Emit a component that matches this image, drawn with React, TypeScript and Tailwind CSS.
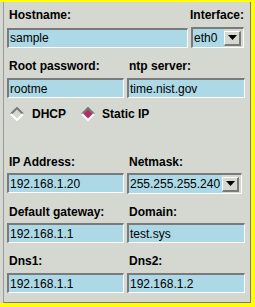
import React from 'react';

const font = { fontFamily: '"Liberation Sans", Arial, sans-serif' };

function Label({ children, right }: { children: React.ReactNode; right?: boolean }) {
  return (
    <div className={`h-[14px] leading-[14px] text-[12px] font-bold text-black px-[2px] ${right ? 'text-right' : ''}`}>
      {children}
    </div>
  );
}

function Entry({ value, className = '' }: { value: string; className?: string }) {
  return (
    <div
      className={`h-[20px] flex items-center bg-[#add8e6] border-t-2 border-l-2 border-t-[#7a7a7a] border-l-[#7a7a7a] border-b border-r border-b-white border-r-white pl-[1px] text-[12px] text-black whitespace-nowrap overflow-hidden ${className}`}
    >
      {value}
    </div>
  );
}

function ArrowButton() {
  return (
    <div className="w-[17px] h-[15px] flex items-center justify-center bg-[#d5d7d1] border-t border-l border-t-white border-l-white border-b-2 border-r-2 border-b-[#7a7a7a] border-r-[#7a7a7a] shrink-0">
      <svg width="9" height="5" viewBox="0 0 9 5">
        <path d="M0 0h9L4.5 5z" fill="#000" />
      </svg>
    </div>
  );
}

function Combo({ value, className = '' }: { value: string; className?: string }) {
  return (
    <div
      className={`h-[21px] flex items-center bg-[#add8e6] border-t-2 border-l-2 border-t-[#7a7a7a] border-l-[#7a7a7a] border-b border-r border-b-white border-r-white text-[12px] text-black ${className}`}
    >
      <span className="flex-1 pl-[1px] whitespace-nowrap overflow-hidden">{value}</span>
      <div className="h-full flex items-center bg-[#d5d7d1] pr-[2px]">
        <ArrowButton />
      </div>
    </div>
  );
}

function Diamond({ on }: { on?: boolean }) {
  return (
    <svg width="14" height="14" viewBox="0 0 14 14" className="shrink-0">
      <path d="M7 0.5L13.5 7L7 13.5L0.5 7z" fill={on ? '#b03060' : '#d5d7d1'} />
      <path d="M1 7L7 1L13 7" fill="none" stroke="#7a7a7a" strokeWidth="2" />
      <path d="M1 7L7 13L13 7" fill="none" stroke="#ffffff" strokeWidth="2" />
    </svg>
  );
}

export default function App() {
  return (
    <div
      className="w-[255px] h-[307px] bg-[#d5d7d1] border-t-2 border-r-4 border-b-4 border-[#ffff00] overflow-hidden"
      style={font}
    >
      <div className="h-full ml-[3px] border-l border-r border-b border-l-[#9a9a9a] border-r-[#7a7a7a] border-b-[#7a7a7a] pl-[3px] pr-[4px] pt-[6px]">
        {/* Hostname / Interface */}
        <div className="flex">
          <div className="flex-1">
            <Label>Hostname:</Label>
          </div>
          <Label right>Interface:</Label>
        </div>
        <div className="flex items-center mt-[5px] gap-[3px]">
          <Entry value="sample" className="w-[181px]" />
          <Combo value="eth0" className="w-[53px]" />
        </div>

        {/* Root password / ntp server */}
        <div className="grid grid-cols-[119px_118px] gap-x-[1px] mt-[11px]">
          <Label>Root password:</Label>
          <Label>ntp server:</Label>
          <Entry value="rootme" className="mt-[5px] mr-[2px]" />
          <Entry value="time.nist.gov" className="mt-[5px]" />
        </div>

        {/* Radio buttons */}
        <div className="flex items-center h-[14px] mt-[9px] text-[12px] font-bold text-black">
          <div className="ml-[3px]">
            <Diamond />
          </div>
          <span className="ml-[8px]">DHCP</span>
          <div className="ml-[15px]">
            <Diamond on />
          </div>
          <span className="ml-[7px]">Static IP</span>
        </div>

        {/* IP / Netmask */}
        <div className="grid grid-cols-[119px_118px] gap-x-[1px] mt-[34px]">
          <Label>IP Address:</Label>
          <Label>Netmask:</Label>
          <Entry value="192.168.1.20" className="mt-[4px] mr-[2px]" />
          <Combo value="255.255.255.240" className="mt-[4px] mr-[3px]" />
        </div>

        {/* Gateway / Domain */}
        <div className="grid grid-cols-[119px_118px] gap-x-[1px] mt-[11px]">
          <Label>Default gateway:</Label>
          <Label>Domain:</Label>
          <Entry value="192.168.1.1" className="mt-[4px] mr-[2px]" />
          <Entry value="test.sys" className="mt-[4px]" />
        </div>

        {/* Dns */}
        <div className="grid grid-cols-[119px_118px] gap-x-[1px] mt-[11px]">
          <Label>Dns1:</Label>
          <Label>Dns2:</Label>
          <Entry value="192.168.1.1" className="mt-[5px] mr-[2px]" />
          <Entry value="192.168.1.2" className="mt-[5px]" />
        </div>
      </div>
    </div>
  );
}
